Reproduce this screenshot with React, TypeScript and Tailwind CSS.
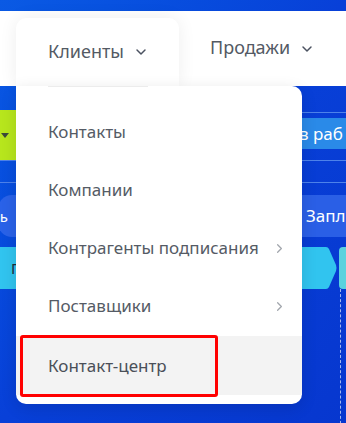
import { ChevronDown, ChevronRight } from 'lucide-react';

const items = [
  { label: 'Контакты', sub: false },
  { label: 'Компании', sub: false },
  { label: 'Контрагенты подписания', sub: true },
  { label: 'Поставщики', sub: true },
];

const App = () => {
  return (
    <div className="relative w-[346px] h-[423px] overflow-hidden bg-gradient-to-br from-[#0a5ae4] via-[#0840d8] to-[#0737cf] font-['Noto_Sans',sans-serif]">
      {/* top navigation */}
      <div className="h-[11px]" />
      <div className="h-[75px] bg-white flex items-stretch">
        <div className="ml-[16px] mt-[7px] w-[163px] bg-white rounded-t-[10px] shadow-[0_0_18px_rgba(0,0,0,0.07)] flex flex-col">
          <div className="flex-1 flex items-center pl-[32px] pb-[2px] text-[18px] text-[#535a64]">
            <span>Клиенты</span>
            <ChevronDown size={16} strokeWidth={2.2} className="ml-[9px] mt-[2px] text-[#4b5260]" />
          </div>
        </div>
        <div className="ml-[31px] flex items-center pb-[2px] text-[18px] text-[#535a64]">
          <span>Продажи</span>
          <ChevronDown size={16} strokeWidth={2.2} className="ml-[9px] mt-[2px] text-[#4b5260]" />
        </div>
      </div>

      {/* board behind the menu */}
      <div className="flex flex-col">
        <div className="h-[74px] flex justify-between">
          <div className="mt-[24px] h-[50px] w-[40px] bg-[#b7e61d] flex items-center pl-[1px]">
            <div className="w-0 h-0 border-l-[4px] border-r-[4px] border-t-[5px] border-l-transparent border-r-transparent border-t-[#3b4a3a]" />
          </div>
          <div className="w-[56px] mt-[26px] border-t border-[#4d82ea]">
            <div className="mt-[5px] h-[31px] bg-[#2a8ae8] flex items-center pl-[9px] text-[17px] text-white whitespace-nowrap overflow-hidden">
              в раб
            </div>
          </div>
        </div>
        <div className="h-[22px] border-t border-[#4d82ea]" />
        <div className="h-[13px] border-t border-[#4d82ea]" />
        <div className="h-[42px] flex justify-between">
          <div className="w-[48px] -ml-[2px] rounded-[14px] bg-[#2a62e8] flex items-center justify-end pr-[38px] text-[15px] text-white">ь</div>
          <div className="w-[56px] bg-[#2a5fe6] flex items-center pl-[16px] text-[17px] text-white whitespace-nowrap overflow-hidden">
            Запл
          </div>
        </div>
        <div className="h-[10px]" />
        <div className="h-[42px] flex justify-between">
          <div className="w-[60px] bg-[#31c4ef] flex items-center pl-[11px] text-[15px] text-[#1d2b3a]">Г</div>
          <div className="flex items-stretch">
            <svg width="37" height="42" viewBox="0 0 37 42">
              <path d="M0 0 H26 Q28 0 29 2 L36 18 Q37 21 36 24 L29 40 Q28 42 26 42 H0 Z" fill="#31c4ef" />
            </svg>
            <div className="ml-[2px] w-[7px] bg-[#5ad2de] rounded-l-[4px]" />
          </div>
        </div>
        <div className="flex justify-end pr-[5px]">
          <div className="w-0 h-[140px] border-l border-dashed border-[#9fb6ee]" />
        </div>
      </div>

      {/* dropdown menu */}
      <div className="absolute left-[16px] top-[86px] w-[286px] h-[318px] bg-white rounded-b-[10px] rounded-tr-[10px] shadow-[0_4px_16px_rgba(0,0,0,0.12)] pt-[17px]">
        <div className="absolute left-[32px] top-0 w-[100px] h-px bg-[#ececec]" />
        {items.map((it) => (
          <div key={it.label} className="h-[58px] flex items-center justify-between pl-[32px] pr-[15px] text-[17px] text-[#555b65]">
            <span>{it.label}</span>
            {it.sub && <ChevronRight size={15} strokeWidth={2} className="text-[#a2a6ad]" />}
          </div>
        ))}
        <div className="relative mt-[1px] h-[59px] bg-[#f3f3f3] flex items-center pl-[32px] text-[17px] text-[#4a4f58]">
          <span>Контакт-центр</span>
          <div className="absolute left-[4px] top-[-1px] w-[198px] h-[62px] border-[3px] border-[#ff0000] rounded-[3px]" />
        </div>
      </div>
    </div>
  );
};

export default App;
